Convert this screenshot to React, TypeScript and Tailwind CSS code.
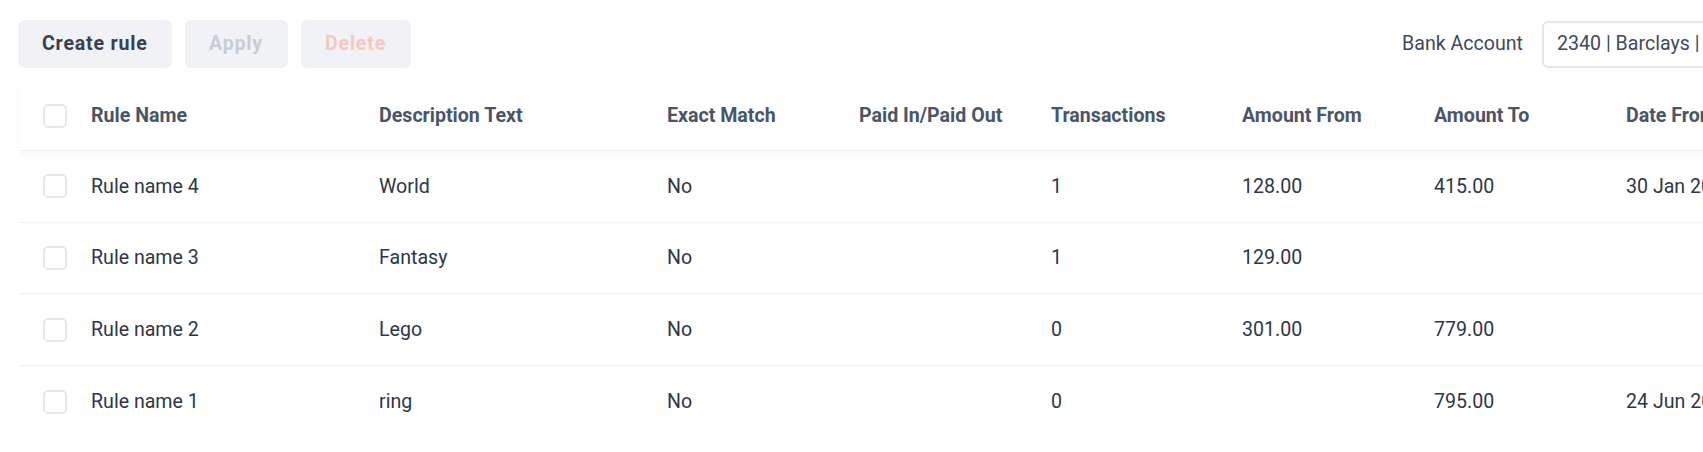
import React from 'react';

interface Rule {
  name: string;
  description: string;
  exactMatch: string;
  paidInOut: string;
  transactions: string;
  amountFrom: string;
  amountTo: string;
  dateFrom: string;
  dateTo: string;
}

const rules: Rule[] = [
  { name: 'Rule name 4', description: 'World', exactMatch: 'No', paidInOut: '', transactions: '1', amountFrom: '128.00', amountTo: '415.00', dateFrom: '30 Jan 2024', dateTo: '' },
  { name: 'Rule name 3', description: 'Fantasy', exactMatch: 'No', paidInOut: '', transactions: '1', amountFrom: '129.00', amountTo: '', dateFrom: '', dateTo: '' },
  { name: 'Rule name 2', description: 'Lego', exactMatch: 'No', paidInOut: '', transactions: '0', amountFrom: '301.00', amountTo: '779.00', dateFrom: '', dateTo: '' },
  { name: 'Rule name 1', description: 'ring', exactMatch: 'No', paidInOut: '', transactions: '0', amountFrom: '', amountTo: '795.00', dateFrom: '24 Jun 2024', dateTo: '' },
];

function Checkbox() {
  return <div className="w-6 h-6 rounded-[5px] border-2 border-[#e2e8f0] bg-white shrink-0" />;
}

function Row({ cells, header }: { cells: string[]; header?: boolean }) {
  const widths = ['w-[288px]', 'w-[288px]', 'w-[192px]', 'w-[192px]', 'w-[191px]', 'w-[192px]', 'w-[192px]', 'w-[192px]', 'w-[192px]'];
  return (
    <div
      className={
        header
          ? 'flex items-center h-[70px] border-b border-[#edf0f6] shadow-[0_5px_8px_rgba(30,40,80,0.025)] text-[#4a5568] font-bold'
          : 'flex items-center h-[71.7px] border-b border-[#eef0f4] last:border-b-0 text-[#2d3748]'
      }
    >
      <div className="pl-6 pr-6 flex items-center">
        <Checkbox />
      </div>
      {cells.map((c, i) => (
        <div key={i} className={`${widths[i]} shrink-0 whitespace-nowrap`}>
          {c}
        </div>
      ))}
    </div>
  );
}

export default function App() {
  return (
    <div className="w-screen h-[452px] overflow-hidden bg-white font-['Roboto',sans-serif] text-[19.6px]">
      <div className="w-[2000px]">
        {/* Toolbar */}
        <div className="flex items-center justify-between pl-[18px] pt-[20px]">
          <div className="flex items-center gap-[13px]">
            <button className="h-12 px-6 rounded-md bg-[#f0f2f6] text-[#374151] font-bold tracking-[0.04em]">
              Create rule
            </button>
            <button className="h-12 w-[103px] rounded-md bg-[#f0f2f6] text-[#c6cdd7] font-bold tracking-[0.04em]">
              Apply
            </button>
            <button className="h-12 w-[110px] rounded-md bg-[#f0f2f6] text-[#f7c9bd] font-bold tracking-[0.04em]">
              Delete
            </button>
          </div>
          <div className="flex items-center gap-[19px]">
            <span className="text-[#3f4a5c]">Bank Account</span>
            <div className="h-[47px] w-[458px] border-2 border-[#e2e8f0] rounded-md flex items-center pl-[13px] text-[#3f4a5c]">
              2340 | Barclays | Current Account
            </div>
          </div>
        </div>

        {/* Table */}
        <div className="mt-[13px] ml-[19px]">
          <Row
            header
            cells={['Rule Name', 'Description Text', 'Exact Match', 'Paid In/Paid Out', 'Transactions', 'Amount From', 'Amount To', 'Date From', 'Date To']}
          />
          {rules.map((r) => (
            <Row
              key={r.name}
              cells={[r.name, r.description, r.exactMatch, r.paidInOut, r.transactions, r.amountFrom, r.amountTo, r.dateFrom, r.dateTo]}
            />
          ))}
        </div>
      </div>
    </div>
  );
}
